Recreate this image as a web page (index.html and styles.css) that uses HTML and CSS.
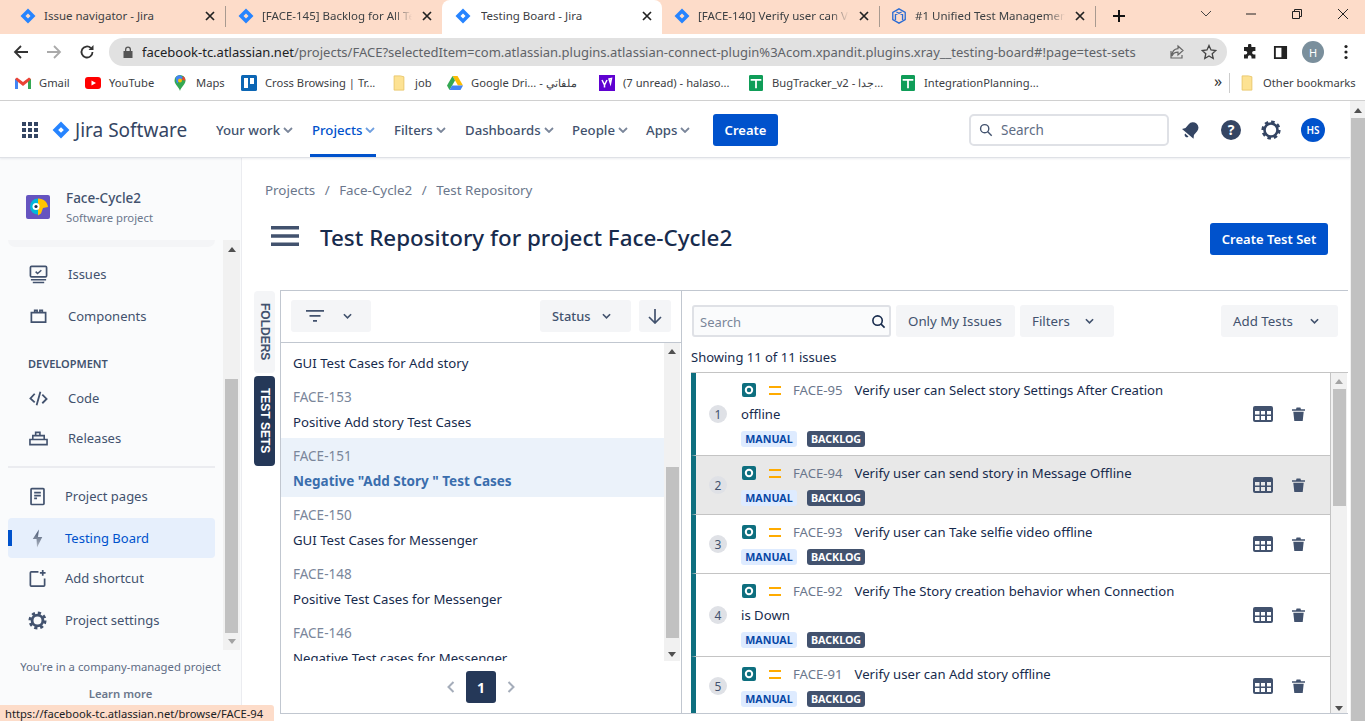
FILE: index.html
```html
<!DOCTYPE html>
<html lang="en">
<head>
<meta charset="utf-8">
<title>Testing Board - Jira</title>
<link rel="stylesheet" href="styles.css">
</head>
<body>
<svg class="defs" width="0" height="0" aria-hidden="true">
  <symbol id="jira" viewBox="0 0 24 24"><path fill-rule="evenodd" d="M12 .8 23.2 12 12 23.2.8 12zM12 8.2 8.2 12l3.8 3.8 3.8-3.8z"/></symbol>
  <symbol id="chev" viewBox="0 0 10 6"><path d="M1 1l4 4 4-4" fill="none" stroke="currentColor" stroke-width="1.8"/></symbol>
  <symbol id="close" viewBox="0 0 10 10"><path d="M1 1l8 8M9 1l-8 8" stroke="currentColor" stroke-width="1.7"/></symbol>
  <symbol id="folder" viewBox="0 0 14 18"><path d="M1.500 1h7l4 1v15h-11z" fill="#fde293" stroke="#e8c568"/></symbol>
  <symbol id="sheet" viewBox="0 0 16 18"><rect width="16" height="18" rx="1.500" fill="#0f9d58"/><path d="M2 4.500h12v2H9v8.500H7V6.500H2z" fill="#fff"/></symbol>
  <symbol id="grid" viewBox="0 0 20 16"><path fill-rule="evenodd" d="M2 0h16a2 2 0 0 1 2 2v12a2 2 0 0 1-2 2H2a2 2 0 0 1-2-2V2a2 2 0 0 1 2-2zM2 5v3.500h4.500V5zm6 0v3.500h4V5zm6 0v3.500h4V5zM2 10v4h4.500v-4zm6 0v4h4v-4zm6 0v4h4v-4z"/></symbol>
  <symbol id="trash" viewBox="0 0 13 14"><path d="M0 2.200h4L4.600.6h3.800L9 2.200h4v1.500H0zM1.300 4.700h10.400L10.700 14H2.300z"/></symbol>
  <symbol id="test" viewBox="0 0 14 14"><rect width="14" height="14" rx="2" fill="#0e6f7f"/><circle cx="7" cy="7" r="3.200" fill="none" stroke="#fff" stroke-width="2"/></symbol>
  <symbol id="prio" viewBox="0 0 12 10"><path d="M0 0h12v2H0zM0 7h12v2H0z" fill="#ffab00"/></symbol>
  <linearGradient id="bolt" x1="0" y1="0" x2="0" y2="1"><stop offset="0" stop-color="#42526e"/><stop offset="1" stop-color="#b3bac5"/></linearGradient>
</svg>

<header class="tabs">
  <div class="tab"><svg class="tab-ico jira-blue"><use href="#jira"/></svg><span class="tab-title">Issue navigator - Jira</span><svg class="tab-x"><use href="#close"/></svg></div>
  <div class="tab tab-sep"><svg class="tab-ico jira-blue"><use href="#jira"/></svg><span class="tab-title tab-fade">[FACE-145] Backlog for All Te</span><svg class="tab-x"><use href="#close"/></svg></div>
  <div class="tab tab-active"><svg class="tab-ico jira-blue"><use href="#jira"/></svg><span class="tab-title">Testing Board - Jira</span><svg class="tab-x"><use href="#close"/></svg></div>
  <div class="tab"><svg class="tab-ico jira-blue"><use href="#jira"/></svg><span class="tab-title tab-fade">[FACE-140] Verify user can Vi</span><svg class="tab-x"><use href="#close"/></svg></div>
  <div class="tab tab-sep tab-end"><svg class="tab-ico xray" viewBox="0 0 18 18"><path d="M9 1l7 4v8l-7 4-7-4V5zM6 4.500l7 3v6M12 4.500l-7 3v6" fill="none" stroke="#2b6cd4" stroke-width="1.500"/></svg><span class="tab-title tab-fade">#1 Unified Test Management</span><svg class="tab-x"><use href="#close"/></svg></div>
  <svg class="newtab" viewBox="0 0 14 14"><path d="M7 1v12M1 7h12" stroke="#111" stroke-width="2"/></svg>
  <div class="win">
    <svg viewBox="0 0 12 8"><path d="M1 1l5 5 5-5" fill="none" stroke="#444"/></svg>
    <svg viewBox="0 0 12 8"><path d="M1 4h10" stroke="#222"/></svg>
    <svg viewBox="0 0 12 12"><path d="M1.500 3.500h7v7h-7zM3.500 3.500v-2h7v7h-2" fill="none" stroke="#222"/></svg>
    <svg viewBox="0 0 12 12"><path d="M1 1l10 10M11 1L1 11" stroke="#222"/></svg>
  </div>
</header>

<div class="toolbar">
  <svg class="tb-btn" viewBox="0 0 16 16"><path d="M15 8H2M8 2L2 8l6 6" fill="none" stroke="#333" stroke-width="1.800"/></svg>
  <svg class="tb-btn" viewBox="0 0 16 16"><path d="M1 8h13M8 2l6 6-6 6" fill="none" stroke="#aaa" stroke-width="1.800"/></svg>
  <svg class="tb-btn" viewBox="0 0 16 16"><path d="M13.500 8a5.500 5.500 0 1 1-1.700-4" fill="none" stroke="#333" stroke-width="1.800"/><path d="M14.500 1v5h-5z" fill="#333"/></svg>
  <div class="omnibox">
    <svg class="lock" viewBox="0 0 10 12"><path fill-rule="evenodd" d="M2 5V3.500a3 3 0 0 1 6 0V5h1.500v7H.5V5zM3.300 5h3.400V3.500a1.700 1.700 0 0 0-3.400 0z" fill="#555"/></svg>
    <span class="url"><b>facebook-tc.atlassian.net</b>/projects/FACE?selectedItem=com.atlassian.plugins.atlassian-connect-plugin%3Acom.xpandit.plugins.xray__testing-board#!page=test-sets</span>
    <svg class="omni-ico" viewBox="0 0 16 16"><path d="M9 2l5 4.500L9 11V8.200C6 8.200 4 9.500 3 12c0-4 2-7 6-7.300zM2 7v7h11v-3" fill="none" stroke="#666" stroke-width="1.200"/></svg>
    <svg class="omni-ico" viewBox="0 0 16 16"><path d="M8 1.500l2 4.500 4.800.5-3.600 3.200 1 4.800L8 12l-4.200 2.500 1-4.800L1.200 6.500 6 6z" fill="none" stroke="#444" stroke-width="1.300"/></svg>
  </div>
  <svg class="tb-ext" viewBox="0 0 16 16"><path d="M6 1.500a1.700 1.700 0 0 1 3.400 0V3h4v4h-1.500a1.800 1.800 0 0 0 0 3.600H13.400v4H9.500V13a1.800 1.800 0 0 0-3.600 0v1.600H2v-4h1.500a1.800 1.800 0 0 0 0-3.600H2V3h4z" fill="#222"/></svg>
  <svg class="tb-ext tb-panel" viewBox="0 0 16 16"><path fill-rule="evenodd" d="M1 1h14v14H1zM3 3v10h6V3z" fill="#222"/></svg>
  <span class="profile">H</span>
  <svg class="tb-more" viewBox="0 0 4 16"><circle cx="2" cy="2.500" r="1.600"/><circle cx="2" cy="8" r="1.600"/><circle cx="2" cy="13.500" r="1.600"/></svg>
</div>

<nav class="bookmarks">
  <a class="bm"><svg viewBox="0 0 16 12"><path d="M0 2v10h3V5l5 4 5-4v7h3V2l-2-1.500L8 5 2 .5z" fill="#ea4335"/><path d="M0 12h3V5L0 2z" fill="#4285f4"/><path d="M13 12h3V2l-3 3z" fill="#34a853"/></svg>Gmail</a>
  <a class="bm"><svg viewBox="0 0 16 12"><rect width="16" height="12" rx="3" fill="#f00"/><path d="M6.500 3.500L11 6l-4.500 2.500z" fill="#fff"/></svg>YouTube</a>
  <a class="bm"><svg viewBox="0 0 12 16"><path d="M6 0a5.500 5.500 0 0 1 5.500 5.500C11.500 9.500 7 12 6 16 5 12 .5 9.500.5 5.500A5.500 5.500 0 0 1 6 0z" fill="#34a853"/><path d="M1.500 2.500A5.500 5.500 0 0 1 6 0l3 2.500-6 6z" fill="#4285f4"/><path d="M9 1a5.500 5.500 0 0 1 2.500 4.500L8 5z" fill="#ea4335"/><circle cx="6" cy="5.500" r="2" fill="#fbbc04"/></svg>Maps</a>
  <a class="bm"><svg viewBox="0 0 16 16"><rect width="16" height="16" rx="1.500" fill="#0c66b4"/><rect x="3" y="3" width="4" height="10" fill="#fff"/><rect x="9" y="3" width="4" height="6" fill="#fff"/></svg>Cross Browsing | Tr...</a>
  <a class="bm"><svg viewBox="0 0 14 18"><use href="#folder"/></svg>job</a>
  <a class="bm"><svg viewBox="0 0 16 14"><path d="M5.500 0h5L16 9.500h-5z" fill="#fbbc04"/><path d="M5.500 0L0 9.500 2.500 14 8 4.500z" fill="#34a853"/><path d="M2.500 14h11L16 9.500H5z" fill="#4285f4"/></svg>Google Dri... - ملفاتي</a>
  <a class="bm"><svg viewBox="0 0 16 16"><rect width="16" height="16" fill="#5f01d1"/><path d="M3 5l2.500 5v2.500M8 5l-2.500 5M10 4l2.500-.5-1 5z" fill="none" stroke="#fff" stroke-width="1.500"/></svg>(7 unread) - halaso...</a>
  <a class="bm"><svg viewBox="0 0 16 18"><use href="#sheet"/></svg>BugTracker_v2 - جدا...</a>
  <a class="bm"><svg viewBox="0 0 16 18"><use href="#sheet"/></svg>IntegrationPlanning...</a>
  <span class="bm-more">»</span>
  <a class="bm bm-other"><svg viewBox="0 0 14 18"><use href="#folder"/></svg>Other bookmarks</a>
</nav>

<div class="viewport">
  <div class="page">
    <header class="topnav">
      <svg class="apps" viewBox="0 0 16 16"><path d="M0 0h4v4H0zM6 0h4v4H6zM12 0h4v4h-4zM0 6h4v4H0zM6 6h4v4H6zM12 6h4v4h-4zM0 12h4v4H0zM6 12h4v4H6zM12 12h4v4h-4z" fill="#344563"/></svg>
      <svg class="logo jira-blue"><use href="#jira"/></svg>
      <span class="brand">Jira Software</span>
      <ul class="menu">
        <li class="menu-item">Your work<svg><use href="#chev"/></svg></li>
        <li class="menu-item menu-on">Projects<svg><use href="#chev"/></svg></li>
        <li class="menu-item">Filters<svg><use href="#chev"/></svg></li>
        <li class="menu-item">Dashboards<svg><use href="#chev"/></svg></li>
        <li class="menu-item">People<svg><use href="#chev"/></svg></li>
        <li class="menu-item">Apps<svg><use href="#chev"/></svg></li>
      </ul>
      <button class="btn-primary btn-create">Create</button>
      <div class="nav-search"><svg viewBox="0 0 16 16"><circle cx="6.500" cy="6.500" r="4.700" fill="none" stroke="#42526e" stroke-width="1.600"/><path d="M10 10l4.500 4.500" stroke="#42526e" stroke-width="1.600"/></svg>Search</div>
      <svg class="nav-ico nav-bell" viewBox="0 0 20 20"><g transform="rotate(40 10 10)"><path d="M10 1.500a5.500 5.500 0 0 1 5.500 5.500v5l2 3H2.500l2-3V7A5.500 5.500 0 0 1 10 1.500z" fill="#344563"/><path d="M7.800 16.500h4.400a2.200 2.200 0 0 1-4.400 0z" fill="#344563"/></g></svg>
      <svg class="nav-ico" viewBox="0 0 20 20"><circle cx="10" cy="10" r="10" fill="#344563"/><text x="10" y="15" class="help-q">?</text></svg>
      <svg class="nav-ico" viewBox="0 0 20 20"><circle cx="10" cy="10" r="6.500" fill="none" stroke="#344563" stroke-width="2.600"/><circle cx="10" cy="10" r="8.300" fill="none" stroke="#344563" stroke-width="2.600" stroke-dasharray="3.500 3"/></svg>
      <span class="avatar">HS</span>
    </header>

    <div class="body">
      <aside class="sidebar">
        <div class="project">
          <svg class="project-ico" viewBox="0 0 24 24"><rect width="24" height="24" rx="2" fill="#6554c0"/><path d="M12 3.500a8 8 0 0 0 0 16z" fill="#00b8d9"/><path d="M12 3.500c6 0 9.500 4 10 8.500l-5 1-2 5.500-3 2z" fill="#ffc400"/><circle cx="10" cy="11.500" r="3.500" fill="#fff"/><circle cx="10" cy="11.500" r="1.600" fill="#172b4d"/></svg>
          <div class="project-text">
            <div class="project-name">Face-Cycle2</div>
            <div class="project-type">Software project</div>
          </div>
        </div>
        <div class="side-scroll">
          <div class="side-list">
            <div class="side-shadow"></div>
            <a class="side-item side-low"><svg viewBox="0 0 20 20"><rect x="1.500" y="1.500" width="17" height="11" rx="1.200" fill="none" stroke="#42526e" stroke-width="1.800"/><path d="M7 7l2 2 4-3.500M2 15.500h16M4 18.500h12" fill="none" stroke="#42526e" stroke-width="1.600"/></svg>Issues</a>
            <a class="side-item side-low"><svg viewBox="0 0 20 20"><path d="M2.500 6h15v10h-15zM6 6V3.500h2.500V6M11.500 6V3.500H14V6" fill="none" stroke="#42526e" stroke-width="1.800"/></svg>Components</a>
            <div class="side-head">DEVELOPMENT</div>
            <a class="side-item side-low side-tight"><svg viewBox="0 0 20 20"><path d="M6 5L1.500 10 6 14M14 6l4.500 4.500L14 15M12 3l-4 14" fill="none" stroke="#42526e" stroke-width="1.900"/></svg>Code</a>
            <a class="side-item side-low"><svg viewBox="0 0 20 20"><path d="M1 11h18v5.500H1zM4 11V7h12v4M7 7V3.500h4.500V7" fill="none" stroke="#42526e" stroke-width="1.700"/></svg>Releases</a>
            <div class="side-rule"></div>
            <a class="side-item"><svg viewBox="0 0 20 20"><path d="M4 1.800h12a.8.8 0 0 1 .8.8v15a.8.8 0 0 1-.8.8H4a.8.8 0 0 1-.8-.8v-15a.8.800 0 0 1 .8-.8zM6.500 6h7M6.500 9h7M6.500 12h3" fill="none" stroke="#42526e" stroke-width="1.800"/></svg>Project pages</a>
            <a class="side-item side-on"><svg viewBox="0 0 20 20"><path d="M11.500 .5L5 10.500h4l.5 9L15 8.500h-4.500z" fill="url(#bolt)"/></svg>Testing Board</a>
            <a class="side-item"><svg viewBox="0 0 20 20"><path d="M11 3H3.500a1 1 0 0 0-1 1v13a1 1 0 0 0 1 1h13a1 1 0 0 0 1-1V10" fill="none" stroke="#42526e" stroke-width="1.800"/><path d="M15.500 1v6M12.500 4h6" stroke="#42526e" stroke-width="1.800"/></svg>Add shortcut</a>
            <a class="side-item"><svg viewBox="0 0 20 20"><circle cx="10" cy="10" r="5.700" fill="none" stroke="#42526e" stroke-width="3"/><circle cx="10" cy="10" r="8" fill="none" stroke="#42526e" stroke-width="3" stroke-dasharray="3.300 3"/></svg>Project settings</a>
          </div>
          <div class="vbar vbar-side"><i class="arrow-up"></i><b class="thumb"></b><i class="arrow-down"></i></div>
        </div>
        <div class="side-foot">
          <p>You're in a company-managed project</p>
          <p class="learn">Learn more</p>
        </div>
      </aside>

      <main class="main">
        <div class="crumbs"><span>Projects</span><i>/</i><span>Face-Cycle2</span><i>/</i><span>Test Repository</span></div>
        <div class="titlebar">
          <svg class="burger" viewBox="0 0 28 20"><path d="M0 0h28v3.500H0zM0 8.200h28v3.500H0zM0 16.500h28V20H0z" fill="#42526e"/></svg>
          <h1>Test Repository for project Face-Cycle2</h1>
          <button class="btn-primary btn-set">Create Test Set</button>
        </div>

        <section class="work">
          <div class="vtabs">
            <div class="vtab vtab-folders">FOLDERS</div>
            <div class="vtab vtab-sets">TEST SETS</div>
          </div>
          <div class="pane-left">
            <div class="left-tools">
              <button class="gbtn gbtn-filter"><svg class="fil" viewBox="0 0 18 12"><path d="M0 0h18v1.800H0zM3.500 5h11v1.800h-11zM7 10h4v1.800H7z" fill="#42526e"/></svg><svg class="chv"><use href="#chev"/></svg></button>
              <button class="gbtn gbtn-status">Status<svg class="chv"><use href="#chev"/></svg></button>
              <button class="gbtn gbtn-sort"><svg viewBox="0 0 14 16"><path d="M7 1v14M1 9l6 6 6-6" fill="none" stroke="#42526e" stroke-width="1.700"/></svg></button>
            </div>
            <div class="set-wrap">
              <ul class="sets">
                <li class="set set-cut"><span class="set-name">GUI Test Cases for Add story</span></li>
                <li class="set"><span class="set-key">FACE-153</span><span class="set-name">Positive Add story Test Cases</span></li>
                <li class="set set-on"><span class="set-key">FACE-151</span><span class="set-name">Negative "Add Story " Test Cases</span></li>
                <li class="set"><span class="set-key">FACE-150</span><span class="set-name">GUI Test Cases for Messenger</span></li>
                <li class="set"><span class="set-key">FACE-148</span><span class="set-name">Positive Test Cases for Messenger</span></li>
                <li class="set"><span class="set-key">FACE-146</span><span class="set-name">Negative Test cases for Messenger</span></li>
              </ul>
              <div class="vbar vbar-sets"><i class="arrow-up"></i><b class="thumb"></b><i class="arrow-down"></i></div>
            </div>
            <div class="pager">
              <svg viewBox="0 0 8 12"><path d="M6.500 1L1.500 6l5 5" fill="none" stroke="#a5adba" stroke-width="2"/></svg>
              <span class="page-no">1</span>
              <svg viewBox="0 0 8 12"><path d="M1.500 1l5 5-5 5" fill="none" stroke="#a5adba" stroke-width="2"/></svg>
            </div>
          </div>

          <div class="pane-right">
            <div class="right-tools">
              <div class="rsearch"><span>Search</span><svg viewBox="0 0 16 16"><circle cx="7" cy="7" r="5" fill="none" stroke="#172b4d" stroke-width="1.700"/><path d="M10.500 10.500l4 4" stroke="#172b4d" stroke-width="1.700"/></svg></div>
              <button class="gbtn gbtn-mine">Only My Issues</button>
              <button class="gbtn gbtn-filters">Filters<svg class="chv"><use href="#chev"/></svg></button>
              <button class="gbtn gbtn-add">Add Tests<svg class="chv"><use href="#chev"/></svg></button>
            </div>
            <div class="showing">Showing 11 of 11 issues</div>
            <div class="test-wrap">
              <ul class="tests">
                <li class="test">
                  <span class="num">1</span>
                  <div class="test-body">
                    <div class="test-line"><svg class="t-ico"><use href="#test"/></svg><svg class="p-ico"><use href="#prio"/></svg><span class="t-key">FACE-95</span><span>Verify user can Select story Settings After Creation offline</span></div>
                    <div class="tags"><span class="tag tag-m">MANUAL</span><span class="tag tag-b">BACKLOG</span></div>
                  </div>
                  <svg class="a-grid"><use href="#grid"/></svg><svg class="a-trash"><use href="#trash"/></svg>
                </li>
                <li class="test test-hover">
                  <span class="num">2</span>
                  <div class="test-body">
                    <div class="test-line"><svg class="t-ico"><use href="#test"/></svg><svg class="p-ico"><use href="#prio"/></svg><span class="t-key">FACE-94</span><span>Verify user can send story in Message Offline</span></div>
                    <div class="tags"><span class="tag tag-m">MANUAL</span><span class="tag tag-b">BACKLOG</span></div>
                  </div>
                  <svg class="a-grid"><use href="#grid"/></svg><svg class="a-trash"><use href="#trash"/></svg>
                </li>
                <li class="test">
                  <span class="num">3</span>
                  <div class="test-body">
                    <div class="test-line"><svg class="t-ico"><use href="#test"/></svg><svg class="p-ico"><use href="#prio"/></svg><span class="t-key">FACE-93</span><span>Verify user can Take selfie video offline</span></div>
                    <div class="tags"><span class="tag tag-m">MANUAL</span><span class="tag tag-b">BACKLOG</span></div>
                  </div>
                  <svg class="a-grid"><use href="#grid"/></svg><svg class="a-trash"><use href="#trash"/></svg>
                </li>
                <li class="test">
                  <span class="num">4</span>
                  <div class="test-body">
                    <div class="test-line"><svg class="t-ico"><use href="#test"/></svg><svg class="p-ico"><use href="#prio"/></svg><span class="t-key">FACE-92</span><span>Verify The Story creation behavior when Connection is Down</span></div>
                    <div class="tags"><span class="tag tag-m">MANUAL</span><span class="tag tag-b">BACKLOG</span></div>
                  </div>
                  <svg class="a-grid"><use href="#grid"/></svg><svg class="a-trash"><use href="#trash"/></svg>
                </li>
                <li class="test">
                  <span class="num">5</span>
                  <div class="test-body">
                    <div class="test-line"><svg class="t-ico"><use href="#test"/></svg><svg class="p-ico"><use href="#prio"/></svg><span class="t-key">FACE-91</span><span>Verify user can Add story offline</span></div>
                    <div class="tags"><span class="tag tag-m">MANUAL</span><span class="tag tag-b">BACKLOG</span></div>
                  </div>
                  <svg class="a-grid"><use href="#grid"/></svg><svg class="a-trash"><use href="#trash"/></svg>
                </li>
              </ul>
              <div class="vbar vbar-tests"><i class="arrow-up arrow-dim"></i><b class="thumb"></b><i class="arrow-down"></i></div>
            </div>
          </div>
        </section>
      </main>
    </div>
  </div>
  <div class="vbar vbar-page"><i class="arrow-up"></i><b class="thumb"></b></div>
  <div class="status">https://facebook-tc.atlassian.net/browse/FACE-94</div>
</div>
</body>
</html>
```
FILE: styles.css
```css
* { box-sizing: border-box; }
html, body { margin: 0; height: 100%; overflow: hidden; }
body { font-family: "Noto Sans", "Open Sans", sans-serif; font-size: 14px; color: #172b4d; background: #fff; }
ul { list-style: none; margin: 0; padding: 0; }
button { font: inherit; border: 0; }
.defs { position: absolute; }
.jira-blue { fill: #2684ff; color: #2684ff; }

/* browser chrome */
.tabs { height: 34px; background: #fddcc9; display: flex; align-items: stretch; padding-left: 8px; font-size: 11.500px; color: #3c4043; }
.tab { width: 217px; display: flex; align-items: center; padding: 0 10px 3px 12px; position: relative; }
.tab-sep { border-left: 1px solid #a89a90; border-image: linear-gradient(transparent 7px, #a89a90 7px, #a89a90 26px, transparent 26px) 1; }
.tab-active { width: 220px; background: #fff; border-radius: 8px 8px 0 0; padding-left: 13px; }
.tab-active .tab-ico { margin-right: 10px; }
.tab-ico { width: 16px; height: 16px; flex: none; margin-right: 8px; }
.xray { margin-left: -1px; }
.tab-title { flex: 1; overflow: hidden; white-space: nowrap; min-width: 0; }
.tab-fade { -webkit-mask-image: linear-gradient(90deg, #000 88%, transparent); mask-image: linear-gradient(90deg, #000 88%, transparent); }
.tab-x { width: 10px; height: 10px; flex: none; margin-left: 10px; color: #222; }
.tab-end { border-right: 1px solid transparent; }
.newtab { width: 14px; height: 14px; margin: 9px 0 0 16px; flex: none; }
.win { display: flex; margin-left: auto; align-items: flex-start; }
.win svg { width: 12px; height: 12px; margin: 8px 0 0; }
.win svg:nth-child(1) { margin-right: 33px; }
.win svg:nth-child(2) { margin-right: 34px; }
.win svg:nth-child(3) { margin-right: 34px; }
.win svg:nth-child(4) { margin-right: 16px; }

.toolbar { height: 33px; display: flex; align-items: center; padding: 3px 0 0 13px; }
.tb-btn { width: 16px; height: 16px; flex: none; margin-right: 17px; }
.omnibox { width: 1118px; margin-left: -3px; height: 28px; border-radius: 14px; background: #e1e1e1; display: flex; align-items: center; padding: 0 10px 0 14px; font-size: 13px; color: #5f6368; }
.lock { width: 10px; height: 12px; flex: none; margin-right: 9px; }
.url { flex: 1; white-space: nowrap; overflow: hidden; min-width: 0; }
.url b { font-weight: 400; color: #202124; }
.omni-ico { width: 16px; height: 16px; margin-left: 16px; flex: none; }
.tb-ext { width: 16px; height: 16px; flex: none; margin-left: 15px; }
.tb-panel { width: 15px; height: 15px; margin-left: 15px; }
.profile { width: 22px; height: 22px; border-radius: 50%; background: #7a8f9c; color: #fff; font-size: 11px; display: flex; align-items: center; justify-content: center; margin-left: 14px; flex: none; }
.tb-more { width: 4px; height: 16px; margin-left: 20px; flex: none; fill: #222; }

.bookmarks { height: 33px; padding: 0 0 2px 15px; display: grid; grid-template-columns: 70px 87px 69px 150px 56px 152px 149px 152px 314px 15px 1fr; align-items: center; font-size: 11.200px; color: #3c4043; }
.bm { display: flex; align-items: center; white-space: nowrap; gap: 8px; }
.bm svg { width: 16px; height: 16px; flex: none; }
.bm-more { font-size: 16px; color: #333; line-height: 1; padding-bottom: 3px; }
.bm-other { border-left: 1px solid #ccc; padding-left: 9px; height: 20px; }

/* page */
.viewport { position: relative; height: 621px; display: flex; border-top: 1px solid #d0d0d0; overflow: hidden; }
.page { flex: 1; min-width: 0; display: flex; flex-direction: column; }
.topnav { height: 57px; display: flex; align-items: center; padding: 2px 0 0 22px; border-bottom: 1px solid #dfe1e6; box-shadow: 0 1px 2px rgba(9,30,66,.08); position: relative; flex: none; color: #42526e; }
.apps { width: 16px; height: 16px; flex: none; }
.logo { width: 18px; height: 18px; margin-left: 14px; flex: none; }
.brand { font-size: 19px; color: #344563; margin-left: 5px; width: 111px; white-space: nowrap; }
.menu { display: grid; grid-template-columns: 96px 82px 71px 107px 74px 65px; margin-left: 28px; height: 100%; }
.menu-item { display: flex; align-items: center; padding-left: 2px; font-size: 13.200px; font-weight: 500; white-space: nowrap; }
.menu-item svg { width: 10px; height: 6px; margin-left: 3px; color: #7a869a; }
.menu-on { color: #0052cc; width: 66px; border-bottom: 3px solid #0052cc; padding-top: 3px; }
.menu-on svg { color: #6f9fe0; }
.btn-primary { background: #0052cc; color: #fff; font-weight: 600; font-size: 13px; border-radius: 3px; }
.btn-create { width: 65px; height: 32px; margin-left: 4px; }
.nav-search { width: 200px; height: 32px; margin-left: 191px; border: 2px solid #dfe1e6; border-radius: 5px; display: flex; align-items: center; padding-left: 8px; gap: 8px; color: #5e6c84; font-size: 13.500px; }
.nav-search svg { width: 14px; height: 14px; }
.nav-ico { width: 20px; height: 20px; flex: none; margin-left: 20px; }
.nav-bell { margin-left: 12px; }
.help-q { font: 700 14px "Noto Sans", sans-serif; fill: #fff; text-anchor: middle; }
.avatar { width: 24px; height: 24px; border-radius: 50%; background: #0052cc; color: #fff; font-size: 10px; font-weight: 600; display: flex; align-items: center; justify-content: center; margin-left: 20px; flex: none; }

.body { flex: 1; min-height: 0; display: flex; }
.sidebar { width: 242px; flex: none; background: #fafbfc; border-right: 1px solid #ebecf0; display: flex; flex-direction: column; color: #42526e; }
.project { height: 82px; flex: none; display: flex; align-items: flex-start; padding: 37px 0 0 26px; }
.project-ico { width: 24px; height: 24px; flex: none; }
.project-text { margin: -7px 0 0 16px; }
.project-name { font-size: 13.500px; font-weight: 500; line-height: 20px; color: #42526e; }
.project-type { font-size: 11.300px; line-height: 19px; color: #6b778c; }
.side-scroll { height: 410px; display: flex; flex: none; }
.side-list { flex: 1; min-width: 0; padding: 0 8px; }
.side-shadow { height: 7px; background: #f4f5f7; border-radius: 0 0 8px 8px; margin-bottom: 7px; }
.side-item { height: 40px; display: flex; align-items: center; padding-left: 20px; gap: 18px; font-size: 13px; color: #42526e; border-radius: 4px; margin-bottom: 2px; position: relative; }
.side-item svg { width: 19px; height: 19px; flex: none; }
.side-low { padding-left: 21px; gap: 20px; }
.side-tight { margin-bottom: 0; }
.side-head { font-size: 11px; font-weight: 600; color: #42526e; height: 20px; line-height: 20px; padding-left: 20px; margin: 18px 0 4px; }
.side-rule { height: 2px; background: #ebecf0; margin: 8px 0 8px; }
.side-on { background: #e6effc; color: #0052cc; margin-bottom: 0; }
.side-on::before { content: ""; position: absolute; left: 0; top: 12px; width: 4px; height: 16px; background: #0052cc; }

.vbar { background: #f1f1f1; display: flex; flex-direction: column; align-items: center; flex: none; position: relative; }
.thumb { display: block; background: #c1c1c1; }
.vbar i { display: block; width: 0; height: 0; border-left: 4px solid transparent; border-right: 4px solid transparent; }
.arrow-up { border-bottom: 5px solid #505050; }
.arrow-down { border-top: 5px solid #505050; }
.arrow-dim { border-bottom-color: #a3a3a3; }
.vbar-side { width: 17px; height: 100%; margin-right: 1px; }
.vbar-side .arrow-up { margin-top: 7px; }
.vbar-side .thumb { width: 13px; height: 254px; margin-top: 127px; }
.vbar-side .arrow-down { margin-top: 6px; border-top-color: #a3a3a3; }
.side-foot { text-align: center; font-size: 11.300px; color: #5e6c84; padding-top: 8px; }
.side-foot p { margin: 0; line-height: 18px; }
.side-foot .learn { margin-top: 9px; font-weight: 600; color: #6b778c; }

.main { flex: 1; min-width: 0; margin-left: -1px; padding-right: 2px; display: flex; flex-direction: column; }
.crumbs { padding: 22px 0 0 24px; height: 42px; line-height: 20px; color: #6b778c; font-size: 13.400px; display: flex; flex: none; }
.crumbs i { font-style: normal; margin: 0 9.500px; }
.titlebar { display: flex; align-items: center; height: 34px; margin-top: 22px; padding-left: 30px; flex: none; }
.burger { width: 28px; height: 20px; flex: none; margin-bottom: 7px; }
h1 { margin: 0 0 3px 21px; font-size: 22.400px; font-weight: 500; color: #172b4d; white-space: nowrap; }
.btn-set { width: 118px; height: 32px; margin-left: auto; margin-right: 20px; }
.work { margin-top: 34px; height: 424px; display: flex; padding-left: 13px; flex: none; }
.vtabs { width: 26px; flex: none; padding-top: 1px; }
.vtab { width: 21px; writing-mode: vertical-rl; font: 700 12px "Liberation Sans", sans-serif; border-radius: 4px; display: flex; align-items: center; justify-content: center; }
.vtab-folders { height: 82px; background: #f4f5f7; color: #42526e; margin-bottom: 3px; }
.vtab-sets { height: 90px; background: #253858; color: #fff; }

.pane-left { width: 402px; flex: none; border: 1px solid #c1c7d0; display: flex; flex-direction: column; }
.left-tools { height: 52px; flex: none; border-bottom: 1px solid #c1c7d0; display: flex; align-items: center; padding: 0 10px 2px; gap: 8px; }
.gbtn { height: 32px; background: #f4f5f7; color: #42526e; border-radius: 3px; display: flex; align-items: center; justify-content: flex-start; padding-left: 12px; font-size: 13.500px; flex: none; }
.chv { width: 9px; height: 6px; color: #42526e; }
.gbtn-filter { width: 80px; gap: 19px; margin-right: auto; padding-left: 15px; }
.fil { width: 18px; height: 12px; }
.gbtn-status { width: 91px; gap: 12px; font-weight: 500; font-size: 12.800px; }
.gbtn-sort { width: 32px; padding-left: 9px; }
.gbtn-sort svg { width: 14px; height: 16px; }
.set-wrap { height: 318px; flex: none; display: flex; overflow: hidden; }
.sets { flex: 1; min-width: 0; }
.set { height: 59px; padding: 6px 0 0 12px; }
.set span { display: block; line-height: 25px; white-space: nowrap; }
.set-cut { height: 36px; padding-top: 8px; }
.set-key { color: #7a869a; font-size: 13.500px; }
.set-name { font-size: 13.200px; color: #172b4d; }
.set-on { background: #ebf2fa; }
.set .set-on-name { color: #3a6ead; }
.set-on .set-name { color: #3a6ead; font-weight: 700; font-size: 13.500px; }
.vbar-sets { width: 16px; height: 100%; margin-right: 1px; }
.vbar-sets .arrow-up { margin-top: 6px; }
.vbar-sets .thumb { width: 13px; height: 171px; margin-top: 113px; }
.vbar-sets .arrow-down { margin-top: 14px; }
.pager { flex: 1; display: flex; align-items: center; justify-content: center; gap: 10px; }
.pager svg { width: 8px; height: 12px; flex: none; margin: 0 1px; }
.page-no { width: 30px; height: 32px; background: #253858; color: #fff; font-weight: 700; font-size: 14px; border-radius: 3px; display: flex; align-items: center; justify-content: center; }

.pane-right { flex: 1; min-width: 0; margin-left: -1px; border-top: 1px solid #c1c7d0; border-bottom: 1px solid #c1c7d0; border-left: 1px solid #c1c7d0; display: flex; flex-direction: column; padding-left: 9px; }
.right-tools { display: flex; margin-top: 14px; height: 32px; padding-left: 1px; flex: none; }
.rsearch { width: 199px; height: 32px; background: #fafbfc; border: 2px solid #dfe1e6; border-radius: 3px; display: flex; align-items: center; justify-content: space-between; padding: 1px 3px 0 6px; font-size: 13px; color: #7a869a; flex: none; }
.rsearch svg { width: 15px; height: 15px; }
.gbtn-mine { width: 119px; margin-left: 5px; font-size: 13.300px; }
.gbtn-filters { width: 94px; margin-left: 5px; gap: 15px; font-size: 13.300px; }
.gbtn-add { width: 117px; margin-left: auto; margin-right: 10px; gap: 17px; font-size: 13.300px; }
.showing { height: 35px; padding-top: 10px; line-height: 20px; font-size: 13px; flex: none; }
.test-wrap { flex: 1; min-height: 0; display: flex; overflow: hidden; border-top: 1px solid #c4c4c4; }
.tests { flex: 1; min-width: 0; }
.test { display: flex; align-items: center; border-left: 5px solid #0e6f7f; border-bottom: 1px solid #c4c4c4; border-right: 1px solid #c4c4c4; }
.test-hover { background: #e8e8e8; }
.num { width: 18px; height: 18px; border-radius: 50%; background: #dfe1e6; font-size: 12px; color: #42526e; display: flex; align-items: center; justify-content: center; margin-left: 13px; flex: none; }
.test-body { width: 440px; margin-left: 14px; padding: 5px 0 8px; flex: none; }
.test-line { line-height: 24px; font-size: 13.150px; color: #172b4d; }
.t-ico { width: 14px; height: 14px; vertical-align: -2px; margin-left: 1px; }
.p-ico { width: 12px; height: 10px; margin-left: 13px; vertical-align: -1px; }
.t-key { color: #6b778c; margin: 0 12px 0 12px; }
.tags { display: flex; gap: 10px; margin-top: 5px; height: 16px; }
.tag { height: 16px; line-height: 16px; font-size: 10.700px; font-weight: 700; border-radius: 3px; text-align: center; }
.tag-m { background: #deebff; color: #0747a6; width: 56px; }
.tag-b { background: #42526e; color: #fff; width: 58px; }
.a-grid { width: 20px; height: 16px; fill: #42526e; margin-left: 72px; flex: none; }
.a-trash { width: 13px; height: 14px; fill: #42526e; margin-left: 19px; flex: none; }
.vbar-tests { width: 16px; margin-right: 1px; }
.vbar-tests .arrow-up { margin-top: 6px; }
.vbar-tests .thumb { width: 13px; height: 117px; margin-top: 5px; }
.vbar-tests .arrow-down { margin-top: 200px; }

.vbar-page { width: 15px; height: 100%; }
.vbar-page .arrow-up { margin-top: 7px; }
.vbar-page .thumb { width: 14px; flex: 1; margin-top: 5px; }
.status { position: absolute; left: 0; bottom: 0; height: 16px; width: 274px; background: #fddcc9; border-radius: 0 3px 0 0; font-size: 11.200px; line-height: 17px; padding-left: 5px; color: #202124; white-space: nowrap; overflow: hidden; }
```
